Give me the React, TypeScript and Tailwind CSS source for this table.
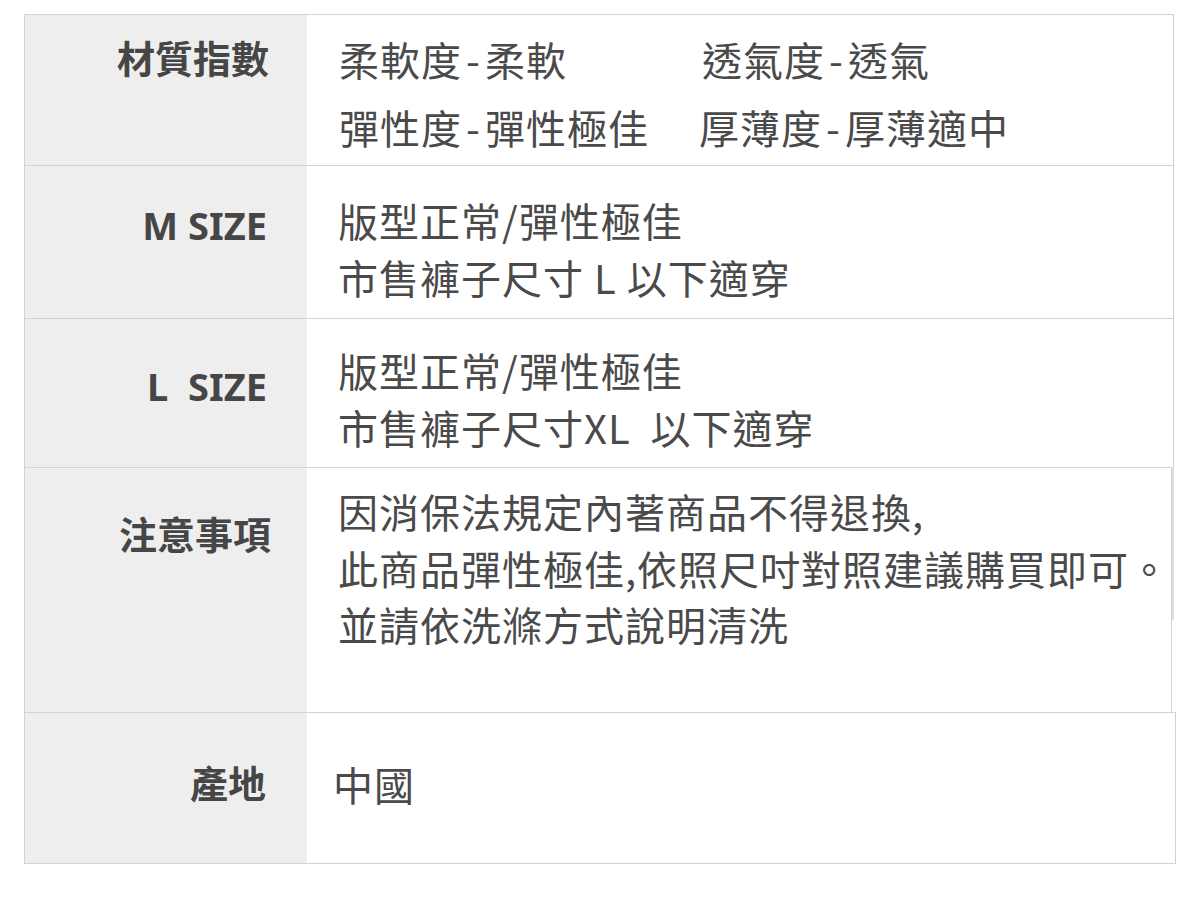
const font = { fontFamily: '"Noto Sans", "Noto Sans CJK TC", sans-serif' };
const cjk = { fontFamily: '"Noto Sans CJK TC", "Noto Sans", sans-serif' };

type Row = {
  label: string
  lines: string[]
  width: string
  height: string
  labelPad: string
  valuePad: string
}

const rows: Row[] = [
  {
    label: "M SIZE",
    lines: ["版型正常/彈性極佳", "市售褲子尺寸 L 以下適穿"],
    width: "w-[1150px]",
    height: "h-[153px]",
    labelPad: "pt-[31px]",
    valuePad: "pt-[26px]",
  },
  {
    label: "L  SIZE",
    lines: ["版型正常/彈性極佳", "市售褲子尺寸XL  以下適穿"],
    width: "w-[1150px]",
    height: "h-[149px]",
    labelPad: "pt-[39px]",
    valuePad: "pt-[23px] pl-[2px]",
  },
];

function Index({ name, value }: { name: string; value: string }) {
  return (
    <div>
      {name}
      <span className="px-[4px]">-</span>
      {value}
    </div>
  );
}

export default function App() {
  return (
    <div className="min-h-[905px] bg-white pt-[14px] pl-[24px] text-[#4a4a4a]" style={font}>
      <div className="flex flex-col items-start">
        {/* 材質指數 */}
        <div className="flex w-[1150px] h-[151px] border-t border-l border-r border-[#d2d2d2]">
          <div className="w-[282px] shrink-0 bg-[#eeeeee] pt-[15px] pr-[38px] text-right text-[38px] leading-[57px] font-bold text-[#464646]">
            材質指數
          </div>
          <div className="grid grid-cols-[363px_auto] pl-[32px] pt-[15px] text-[40px] leading-[58px] tracking-[1px] whitespace-pre" style={cjk}>
            <Index name="柔軟度" value="柔軟" />
            <Index name="透氣度" value="透氣" />
            <Index name="彈性度" value="彈性極佳" />
            <div className="-ml-[3px]">
              <Index name="厚薄度" value="厚薄適中" />
            </div>
          </div>
        </div>

        {rows.map((row, i) => (
          <div key={i} className={"flex border-t border-l border-r border-[#d2d2d2] " + row.width + " " + row.height}>
            <div className={"w-[282px] shrink-0 bg-[#eeeeee] pr-[40px] text-right text-[38px] leading-[57px] font-bold text-[#464646] whitespace-pre " + row.labelPad}>
              {row.label}
            </div>
            <div className={"pl-[31px] text-[40px] leading-[57px] tracking-[1px] whitespace-pre " + row.valuePad} style={cjk}>
              {row.lines.map((line, j) => (
                <div key={j}>{line}</div>
              ))}
            </div>
          </div>
        ))}

        {/* 注意事項 */}
        <div className="flex items-start">
          <div className="flex w-[1148px] h-[245px] border-t border-l border-r border-[#d2d2d2]">
            <div className="w-[282px] shrink-0 bg-[#eeeeee] pt-[38px] pr-[36px] text-right text-[38px] leading-[57px] font-bold text-[#464646]">
              注意事項
            </div>
            <div className="pl-[31px] pt-[15px] text-[40px] leading-[56.5px] tracking-[1px] whitespace-pre" style={cjk}>
              <div>因消保法規定內著商品不得退換,</div>
              <div>此商品彈性極佳,依照尺吋對照建議購買即可。</div>
              <div>並請依洗滌方式說明清洗</div>
            </div>
          </div>
          <div className="w-[2px] h-[153px] bg-[#dedede]" />
        </div>

        {/* 產地 */}
        <div className="flex w-[1152px] h-[152px] border border-[#d2d2d2]">
          <div className="w-[282px] shrink-0 bg-[#eeeeee] pt-[42px] pr-[41px] text-right text-[38px] leading-[57px] font-bold text-[#464646]">
            產地
          </div>
          <div className="pl-[26px] pt-[43px] text-[40px] leading-[57px] tracking-[1px]" style={cjk}>
            中國
          </div>
        </div>
      </div>
    </div>
  );
}
